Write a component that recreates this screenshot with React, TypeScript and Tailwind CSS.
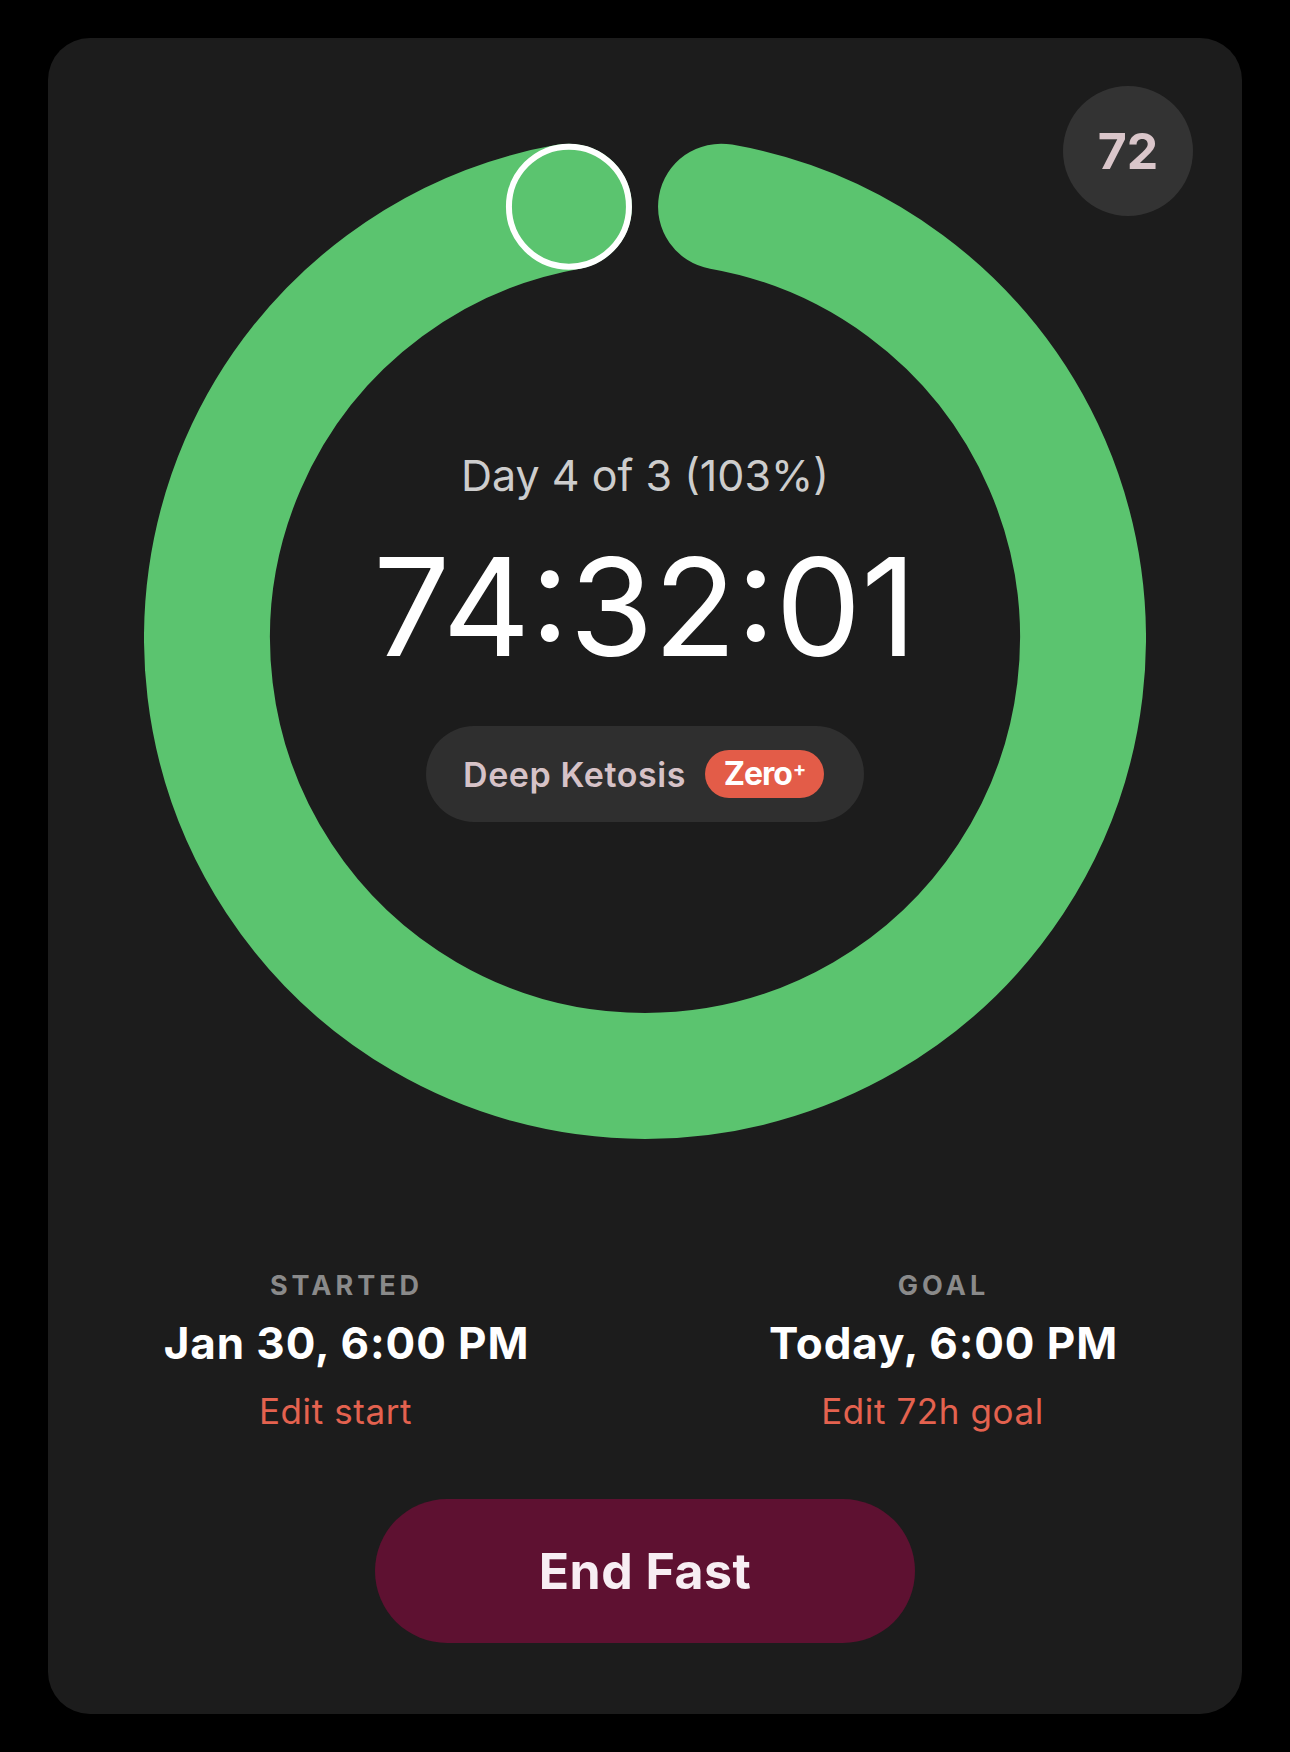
import React from "react";

const GREEN = "#5bc46f";

function Ring() {
  const c = 501;
  const r = 438;
  const a = (10 * Math.PI) / 180;
  const sx = c + r * Math.sin(a);
  const sy = c - r * Math.cos(a);
  const ex = c - r * Math.sin(a);
  const ey = sy;
  return (
    <svg width="1002" height="1002" viewBox="0 0 1002 1002" className="absolute inset-0">
      <path
        d={`M ${sx} ${sy} A ${r} ${r} 0 1 1 ${ex} ${ey}`}
        fill="none"
        stroke={GREEN}
        strokeWidth={126}
        strokeLinecap="round"
      />
      <circle cx={ex} cy={ey} r={60} fill={GREEN} stroke="#ffffff" strokeWidth={6} />
    </svg>
  );
}

export default function App() {
  return (
    <div className="w-[1290px] h-[1752px] bg-black pt-[38px] pl-[48px]" style={{ fontFamily: "Inter, 'Noto Sans', sans-serif" }}>
      <div className="relative w-[1194px] h-[1676px] rounded-[42px] bg-[#1c1c1c] pt-[99px] flex flex-col items-center">
        <div className="absolute top-[48px] right-[49px] w-[130px] h-[130px] rounded-full bg-[#333333] flex items-center justify-center text-[50px] font-bold text-[#dac6ca]">
          72
        </div>

        <div className="relative w-[1002px] h-[1002px]">
          <Ring />
          <div className="absolute inset-0 flex flex-col items-center pt-[313px]">
            <div className="h-[50px] leading-[50px] text-[43px] font-normal text-[#cdcdcd] tracking-[0px]">
              Day 4 of 3 (103%)
            </div>
            <div className="mt-[39px] h-[136px] leading-[136px] text-[136px] font-normal text-white tracking-[0px]">
              74:32:01
            </div>
            <div className="mt-[51px] h-[96px] w-[438px] rounded-full bg-[#2f2f2f] flex items-center pl-[37px]">
              <span className="text-[34px] font-semibold text-[#d6c2c7] tracking-[0.6px]">Deep Ketosis</span>
              <span className="ml-[19px] h-[48px] w-[119px] rounded-full bg-[#e35c48] flex items-center justify-center text-white text-[32px] font-bold tracking-[-1px]">
                Zero<sup className="text-[20px] font-bold ml-[1px] relative -top-[5px]">+</sup>
              </span>
            </div>
          </div>
        </div>

        <div className="mt-[131px] w-full grid grid-cols-2">
          <div className="flex flex-col items-center">
            <div className="h-[32px] leading-[32px] text-[27px] font-bold tracking-[4px] text-[#8a8a8a]">STARTED</div>
            <div className="mt-[16px] h-[50px] leading-[50px] text-[44px] font-bold text-white tracking-[0.9px]">Jan 30, 6:00 PM</div>
            <div className="mt-[22px] h-[42px] leading-[42px] text-[35px] font-normal text-[#e4624f] tracking-[0.6px] pr-[22px]">Edit start</div>
          </div>
          <div className="flex flex-col items-center">
            <div className="h-[32px] leading-[32px] text-[27px] font-bold tracking-[4px] text-[#8a8a8a]">GOAL</div>
            <div className="mt-[16px] h-[50px] leading-[50px] text-[44px] font-bold text-white tracking-[0.9px]">Today, 6:00 PM</div>
            <div className="mt-[22px] h-[42px] leading-[42px] text-[35px] font-normal text-[#e4624f] tracking-[0.6px] pr-[22px]">Edit 72h goal</div>
          </div>
        </div>

        <button className="mt-[67px] w-[540px] h-[144px] rounded-full bg-[#5e1131] text-[50px] font-bold text-[#f7eef3] tracking-[0.5px]">
          End Fast
        </button>
      </div>
    </div>
  );
}
